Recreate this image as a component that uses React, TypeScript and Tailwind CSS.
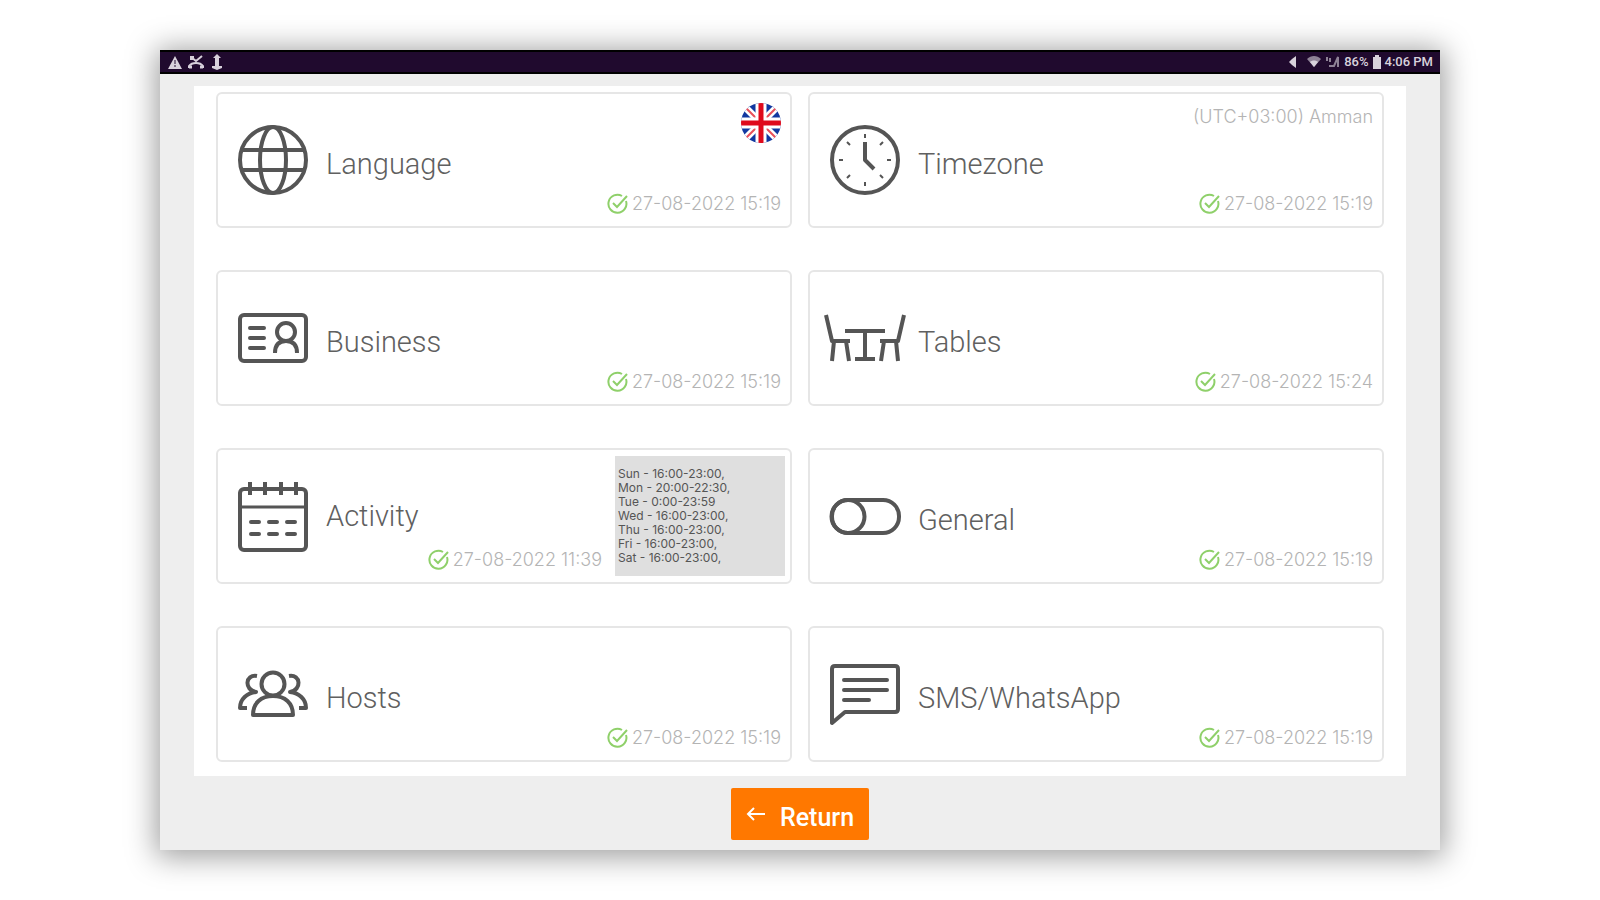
import React from 'react';

interface Setting {
  id: string;
  title: string;
  icon: React.ReactNode;
  updated?: string;
  badge?: React.ReactNode;
  schedule?: string[];
}

const Icon: React.FC<{ children: React.ReactNode }> = ({ children }) => (
  <svg
    viewBox="0 0 84 84"
    className="w-[84px] h-[84px] shrink-0"
    fill="none"
    stroke="#555555"
    strokeWidth="4"
    strokeLinejoin="round"
    aria-hidden="true"
  >
    {children}
  </svg>
);

const GlobeIcon = () => (
  <Icon>
    <circle cx="42" cy="42" r="33" />
    <ellipse cx="42" cy="42" rx="13" ry="33" />
    <path d="M11 32H73M11 52H73" />
  </Icon>
);

const ClockIcon = () => (
  <Icon>
    <circle cx="42" cy="42" r="33" />
    <path d="M42 24V42L51 51" />
    <path
      strokeWidth="2"
      d="M42 16v4M42 64v4M16 42h4M64 42h4M24 24l3 3M60 24l-3 3M24 60l3-3M60 60l-3-3"
    />
  </Icon>
);

const BusinessIcon = () => (
  <Icon>
    <rect x="9" y="19" width="66" height="46" rx="4" />
    <path strokeLinecap="round" d="M19 32H33M19 42H33M19 52H33" />
    <circle cx="55" cy="36" r="9" />
    <path d="M44 57C44 49 48 45 55 45C62 45 66 49 66 57" />
  </Icon>
);

const TablesIcon = () => (
  <Icon>
    <path d="M3 19L9 45H27M11 45L9 65M23 45L26 65" />
    <path d="M81 19L75 45H57M73 45L75 65M61 45L58 65" />
    <path d="M22 35H62M42 35V63M32 63H52" />
  </Icon>
);

const CalendarIcon = () => (
  <Icon>
    <rect x="9" y="15" width="66" height="61" rx="4" />
    <path strokeWidth="3" d="M9 33H75" />
    <path d="M19 8V21M34 8V21M50 8V21M65 8V21" />
    <path strokeLinecap="round" d="M20 48H28M38 48H46M56 48H64M20 60H28M38 60H46M56 60H64" />
  </Icon>
);

const ToggleIcon = () => (
  <Icon>
    <rect x="9" y="26" width="67" height="33" rx="16" />
    <circle cx="25" cy="42.5" r="16.5" />
  </Icon>
);

const HostsIcon = () => (
  <Icon>
    <circle cx="42" cy="32" r="11.5" />
    <path d="M22 63C22 51 30 44 42 44C54 44 62 51 62 63Z" />
    <path d="M26 24C14 22 13 38 25 40C16 41 9 47 9 56H16" />
    <path d="M58 24C70 22 71 38 59 40C68 41 75 47 75 56H68" />
  </Icon>
);

const MessageIcon = () => (
  <Icon>
    <path d="M9 17Q9 14 12 14H72Q75 14 75 17V57Q75 60 72 60H22L9 71Z" />
    <path strokeLinecap="round" d="M21 28H64M21 38H64M21 48H46" />
  </Icon>
);

const CheckIcon = () => (
  <svg viewBox="0 0 22 22" className="w-[22px] h-[22px]" fill="none" stroke="#8fd06a" strokeWidth="2" aria-hidden="true">
    <path d="M19 8A9 9 0 1 1 15 3" />
    <path d="M6 10L10 14L20 3" />
  </svg>
);

const UkFlag = () => (
  <svg viewBox="0 0 40 40" className="w-10 h-10" role="img" aria-label="English">
    <clipPath id="flag-clip">
      <circle cx="20" cy="20" r="20" />
    </clipPath>
    <g clipPath="url(#flag-clip)">
      <rect width="40" height="40" fill="#1238a0" />
      <path d="M0 0L40 40M40 0L0 40" stroke="#ffffff" strokeWidth="7" />
      <path d="M0 0L40 40M40 0L0 40" stroke="#e8505a" strokeWidth="2" />
      <path d="M20 0V40M0 20H40" stroke="#ffffff" strokeWidth="11" />
      <path d="M20 0V40M0 20H40" stroke="#df0a1c" strokeWidth="5" />
    </g>
  </svg>
);

const SETTINGS: Setting[] = [
  { id: 'language', title: 'Language', icon: <GlobeIcon />, updated: '27-08-2022 15:19', badge: <UkFlag /> },
  { id: 'timezone', title: 'Timezone', icon: <ClockIcon />, updated: '27-08-2022 15:19', badge: '(UTC+03:00) Amman' },
  { id: 'business', title: 'Business', icon: <BusinessIcon />, updated: '27-08-2022 15:19' },
  { id: 'tables', title: 'Tables', icon: <TablesIcon />, updated: '27-08-2022 15:24' },
  {
    id: 'activity',
    title: 'Activity',
    icon: <CalendarIcon />,
    updated: '27-08-2022 11:39',
    schedule: [
      'Sun - 16:00-23:00,',
      'Mon - 20:00-22:30,',
      'Tue - 0:00-23:59',
      'Wed - 16:00-23:00,',
      'Thu - 16:00-23:00,',
      'Fri - 16:00-23:00,',
      'Sat - 16:00-23:00,',
    ],
  },
  { id: 'general', title: 'General', icon: <ToggleIcon />, updated: '27-08-2022 15:19' },
  { id: 'hosts', title: 'Hosts', icon: <HostsIcon />, updated: '27-08-2022 15:19' },
  { id: 'messages', title: 'SMS/WhatsApp', icon: <MessageIcon />, updated: '27-08-2022 15:19' },
];

const SettingCard: React.FC<{ setting: Setting }> = ({ setting }) => (
  <button
    type="button"
    className="flex min-h-[136px] w-full rounded-md border-2 border-[#e6e6e6] bg-white pl-[13px] text-left"
  >
    <span className="flex items-center gap-[11px] self-center">
      {setting.icon}
      <span className={`text-[29px] leading-9 font-light text-[#606060] ${setting.schedule ? '' : 'pt-2'}`}>
        {setting.title}
      </span>
    </span>
    <span className="flex grow flex-col items-end justify-between self-stretch px-[9px] pt-[9px] pb-2 font-[Inter,sans-serif] text-lg font-light text-[#b4b4b4]">
      <span>{setting.badge}</span>
      <span className="flex items-center gap-[3px] whitespace-nowrap">
        <CheckIcon />
        {setting.updated}
      </span>
    </span>
    {setting.schedule && (
      <span className="my-[6px] mr-[5px] ml-1 flex w-[170px] flex-col justify-center self-stretch bg-[#dfdfdf] pl-[3px] font-[Inter,sans-serif] text-xs leading-[14px] text-[#555555]">
        {setting.schedule.map((line) => (
          <span key={line}>{line}</span>
        ))}
      </span>
    )}
  </button>
);

const StatusBar = () => (
  <header className="flex h-6 items-center justify-between border-y-2 border-black bg-[#200a2e] px-[7px] text-[#d8d2dc]">
    <div className="flex items-center gap-1">
      <svg viewBox="0 0 16 16" className="w-4 h-4" aria-hidden="true">
        <path fill="currentColor" d="M8 2L15 15H1Z" />
        <path stroke="#200a2e" strokeWidth="1" d="M8 6V10M8 11V13" />
      </svg>
      <svg viewBox="0 0 18 16" className="w-[18px] h-4" fill="none" stroke="currentColor" aria-hidden="true">
        <path strokeWidth="2" d="M4 3L9 7L15 2M4 6V3H7" />
        <path strokeWidth="2" d="M2 14V12C5 8 13 8 16 12V14" />
        <path strokeWidth="3" d="M2 13H5M13 13H16" />
      </svg>
      <svg viewBox="0 0 16 16" className="w-4 h-4" fill="currentColor" aria-hidden="true">
        <path d="M8 0L12 4H10V12H13V14L8 16L3 14V12H6V4H4Z" />
      </svg>
    </div>
    <div className="flex items-center gap-1 text-[13px] leading-5 font-medium">
      <svg viewBox="0 0 10 16" className="w-[10px] h-4" fill="currentColor" aria-hidden="true">
        <path d="M8 2V14L4 11L1 8L4 5Z" />
      </svg>
      <svg viewBox="0 0 16 16" className="ml-1 w-4 h-4" fill="currentColor" aria-hidden="true">
        <path opacity="0.6" d="M1 5C5 1 11 1 15 5L8 13Z" />
        <path d="M4 8C6 6 10 6 12 8L8 13Z" />
      </svg>
      <svg viewBox="0 0 14 16" className="w-[14px] h-4 opacity-60" fill="none" stroke="currentColor" aria-hidden="true">
        <path strokeWidth="2" d="M1 3V7M4 4V8M3 12H8L12 3V13" />
      </svg>
      <span>86%</span>
      <svg viewBox="0 0 8 16" className="w-2 h-4" fill="currentColor" aria-hidden="true">
        <path d="M2 1H6V3H8V15H0V3H2Z" />
      </svg>
      <span>4:06 PM</span>
    </div>
  </header>
);

const App: React.FC = () => {
  return (
    <div className="min-h-screen bg-white pt-[50px] pb-[49px] font-[Roboto,sans-serif]">
      <div className="mx-auto w-4/5 bg-[#eeeeee] pb-[10px] shadow-[0_3px_28px_4px_rgba(0,0,0,0.38)]">
        <StatusBar />
        <main className="mx-[34px] mt-3 grid grid-cols-2 gap-x-4 gap-y-[42px] bg-white px-[22px] pt-[6px] pb-[14px]">
          {SETTINGS.map((setting) => (
            <SettingCard key={setting.id} setting={setting} />
          ))}
        </main>
        <div className="mt-3 flex justify-center">
          <button
            type="button"
            className="flex h-[52px] items-center gap-[14px] rounded-xs bg-[#ff7800] px-[15px] text-white"
          >
            <svg viewBox="0 0 20 16" className="w-5 h-4" fill="none" stroke="currentColor" strokeWidth="2" aria-hidden="true">
              <path d="M19 8H2M8 2L2 8L8 14" />
            </svg>
            <span className="pt-2 text-[25px] leading-8 font-medium">Return</span>
          </button>
        </div>
      </div>
    </div>
  );
};

export default App;
